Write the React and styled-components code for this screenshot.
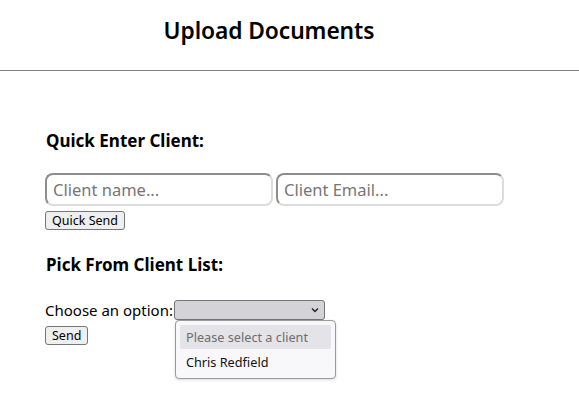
import React, { useState } from "react";
import styled, { createGlobalStyle } from "styled-components";

const GlobalStyle = createGlobalStyle`
  html, body {
    margin: 0;
    background: #fff;
  }
  body {
    font-family: "Noto Sans", "Open Sans", sans-serif;
    color: #000;
  }
`;

const Header = styled.header`
  height: 71px;
  border-bottom: 1px solid #808080;
  display: flex;
  align-items: center;
  justify-content: center;
  padding-right: 41px;
  padding-bottom: 10px;
  box-sizing: border-box;
`;

const Title = styled.h1`
  margin: 0;
  font-size: 22.8px;
  font-weight: 600;
  letter-spacing: -0.1px;
`;

const Main = styled.main`
  padding: 0 45px 56px;
`;

const SectionTitle = styled.h3`
  margin: ${(p) => p.$top}px 0 0 1px;
  font-size: 17px;
  font-weight: 700;
  line-height: 22px;
`;

const InputRow = styled.div`
  display: flex;
  gap: 3px;
  margin-top: 21px;
`;

const TextInput = styled.input`
  width: 228px;
  height: 33px;
  box-sizing: border-box;
  border: 2px solid #dcdcdc;
  border-top-color: #8d8d8d;
  border-left-color: #8d8d8d;
  border-radius: 8px;
  padding: 0 6px;
  font-family: inherit;
  font-size: 16.5px;
  outline: none;
  &::placeholder {
    color: #767676;
  }
`;

const Button = styled.button`
  display: block;
  margin-top: ${(p) => p.$top || 0}px;
  height: 19px;
  padding: 0 6px;
  box-sizing: border-box;
  font-family: inherit;
  font-size: 12.5px;
  line-height: 17px;
  color: #000;
  background: #efefef;
  border: 1px solid #767676;
  border-radius: 3px;
`;

const ChooseRow = styled.div`
  display: flex;
  align-items: center;
  margin-top: 24px;
  font-size: 15px;
  height: 20px;
  position: relative;
  z-index: 2;
`;

const SelectWrap = styled.div`
  position: relative;
  margin-left: 1px;
`;

const SelectBox = styled.div`
  width: 151px;
  height: 20px;
  box-sizing: border-box;
  background: #d3d3d8;
  border: 1px solid #767676;
  border-radius: 3px;
  display: flex;
  align-items: center;
  justify-content: flex-end;
  padding-right: 5px;
`;

const Popup = styled.div`
  position: absolute;
  left: 1px;
  top: 20px;
  width: 161px;
  height: 59px;
  box-sizing: border-box;
  background: #f8f8fa;
  border: 1px solid #9a9a9a;
  border-radius: 4px;
  box-shadow: 0 1px 3px rgba(0, 0, 0, 0.15);
  padding: 4px;
  font-size: 12.7px;
`;

const Option = styled.div`
  height: ${(p) => (p.$active ? 24 : 27)}px;
  line-height: ${(p) => (p.$active ? 24 : 27)}px;
  padding-left: 6px;
  border-radius: 2px;
  white-space: nowrap;
  background: ${(p) => (p.$active ? "#e4e4e8" : "transparent")};
  color: ${(p) => (p.$disabled ? "#6d6d6d" : "#111")};
`;

const Chevron = () => (
  <svg width="8" height="6" viewBox="0 0 8 6">
    <path d="M1 1.5 L4 4.5 L7 1.5" fill="none" stroke="#222" strokeWidth="1.4" />
  </svg>
);

export default function App() {
  const [name, setName] = useState("");
  const [email, setEmail] = useState("");

  return (
    <>
      <GlobalStyle />
      <Header>
        <Title>Upload Documents</Title>
      </Header>
      <Main>
        <SectionTitle $top={59}>Quick Enter Client:</SectionTitle>
        <InputRow>
          <TextInput
            placeholder="Client name..."
            value={name}
            onChange={(e) => setName(e.target.value)}
          />
          <TextInput
            placeholder="Client Email..."
            value={email}
            onChange={(e) => setEmail(e.target.value)}
          />
        </InputRow>
        <Button $top={5}>Quick Send</Button>
        <SectionTitle $top={24}>Pick From Client List:</SectionTitle>
        <ChooseRow>
          Choose an option:
          <SelectWrap>
            <SelectBox>
              <Chevron />
            </SelectBox>
            <Popup>
              <Option $active $disabled>Please select a client</Option>
              <Option>Chris Redfield</Option>
            </Popup>
          </SelectWrap>
        </ChooseRow>
        <Button $top={6}>Send</Button>
      </Main>
    </>
  );
}
